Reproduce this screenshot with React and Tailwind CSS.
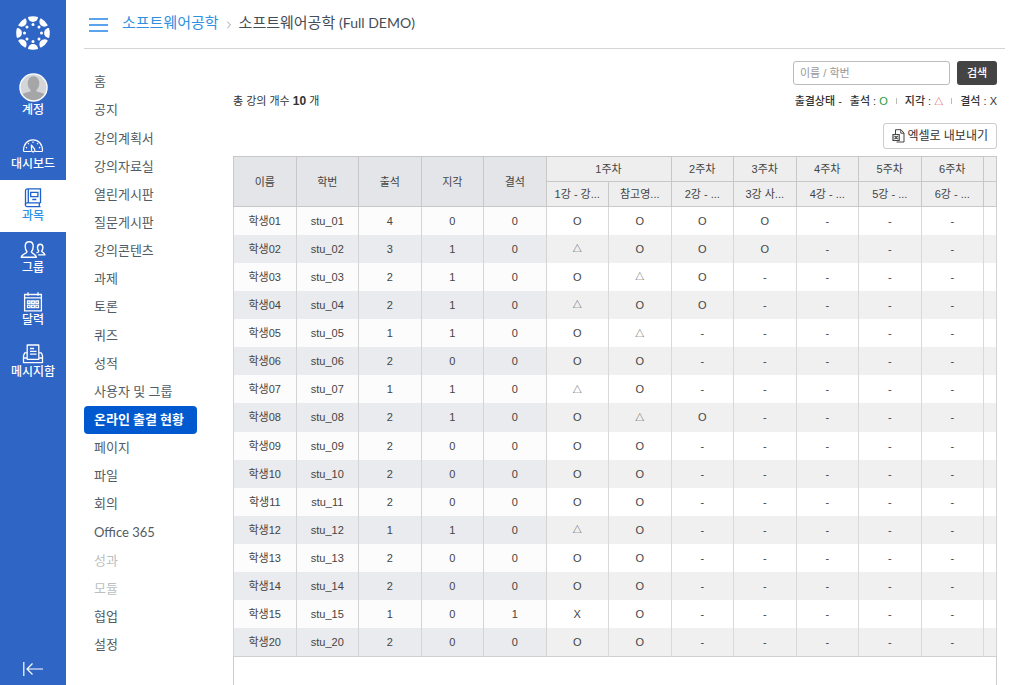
import React, { useState } from 'react';
import { ChevronRight } from 'lucide-react';

const angles = [0, 45, 90, 135, 180, 225, 270, 315];

const LogoIcon = () => (
  <svg viewBox="-17 -17 34 34" className="w-[34px] h-[34px]" fill="white">
    {angles.map((a) => (
      <g key={a} transform={`rotate(${a})`}>
        <path d="M-5 -16 A16.8 16.8 0 0 1 5 -16 A5 4.9 0 0 1 -5 -16Z" />
        <circle cx="0" cy="-8.5" r="1.5" />
      </g>
    ))}
  </svg>
);

const AvatarIcon = () => (
  <svg viewBox="0 0 29 29" className="w-[29px] h-[29px]">
    <clipPath id="avatar">
      <circle cx="14.5" cy="14.5" r="13" />
    </clipPath>
    <circle cx="14.5" cy="14.5" r="13" fill="#d3d5d8" />
    <g clipPath="url(#avatar)" fill="#a6a6a8">
      <ellipse cx="14.5" cy="10.5" rx="5.8" ry="7.3" />
      <path d="M11.5 15h6v3.5c3 .8 8.5 1.5 9.5 5V29H2v-5.5c1-3.5 6.5-4.2 9.5-5z" />
    </g>
    <circle cx="14.5" cy="14.5" r="13.5" fill="none" stroke="white" strokeWidth="1.5" />
  </svg>
);

const DashboardIcon = () => (
  <svg viewBox="0 0 24 20" className="w-6 h-5" fill="none" stroke="currentColor" strokeWidth="1.2">
    <path d="M10 15.500H3.200A.8.8 0 0 1 2.500 14.600C2.500 8 6.500 3.800 12 3.800s9.500 4.200 9.500 10.800a.8.8 0 0 1-.7.9H14" strokeLinejoin="round" />
    <path d="M10.300 9l3.300 4.100a1.800 1.800 0 0 1-2.900 2.100z" strokeLinejoin="round" />
    <path d="M12 5.500v1.500M7 7.200l.8.9M17 7.200l-.8.9M4.800 11.400l1.200.5M19.200 11.400l-1.200.5" />
  </svg>
);

const CoursesIcon = () => (
  <svg viewBox="0 0 24 20" className="w-6 h-5" fill="none" stroke="#1c62c9" strokeWidth="1.3">
    <path d="M19.500 15V.8H6.500a2 2 0 0 0-2 2v13.700" />
    <path d="M19.500 14.800H6.300a1.900 1.900 0 0 0 0 3.900H19.500M18.300 15v3.600M7.300 1v13.800" />
    <path d="M9.700 4.300h7.200v4.400H9.700zM11.300 11.500h4" />
  </svg>
);

const GroupsIcon = () => (
  <svg viewBox="0 0 26 20" className="w-[26px] h-5" fill="none" stroke="currentColor" strokeWidth="1.4" strokeLinejoin="round">
    <path d="M7 11.800C5.700 10.500 5.200 8.500 5.200 6.200 5.200 3.400 6.700 1.700 9.200 1.700s4 1.700 4 4.500c0 2.300-.5 4.300-1.800 5.600 0 2 4.400 1.600 4.900 5.400H1.300C1.800 13.400 7 13.800 7 11.800z" />
    <path d="M16.500 12.800c1.700-.5 2.300-.9 2.300-1.900-.9-.8-1.300-2-1.300-3.500 0-2 .9-3.200 2.700-3.200s2.700 1.200 2.700 3.200c0 1.500-.4 2.700-1.300 3.500 0 1.600 3 1.200 3.300 4h-6.700" />
  </svg>
);

const CalendarIcon = () => (
  <svg viewBox="0 0 24 20" className="w-6 h-5" fill="none" stroke="currentColor" strokeWidth="1.3">
    <path d="M3.600 2.500H20.400V18.800H3.600zM3.600 5.800H20.400M7 .3v3.500M17 .3v3.500" />
    <path d="M6.500 9h2.600v2.400H6.500zM10.700 9h2.600v2.400h-2.600zM14.900 9h2.600v2.400h-2.600zM6.500 13.200h2.600v2.400H6.500zM10.700 13.200h2.600v2.400h-2.600zM14.900 13.200h2.600v2.400h-2.600z" />
  </svg>
);

const InboxIcon = () => (
  <svg viewBox="0 0 24 20" className="w-6 h-5" fill="none" stroke="currentColor" strokeWidth="1.3" strokeLinejoin="round">
    <path d="M6.200 13.500V1H17.800V13.500M9 4.500h4M9 7.300h6.500M9 10.200h6.500" />
    <path d="M6 8.800H3.700l-1.200 3V18.600H21.500V11.800l-1.200-3H18M2.500 14H6.200v1.300H17.800V14H21.500" />
  </svg>
);

const ExcelIcon = () => (
  <svg viewBox="0 0 13 14" className="w-[13px] h-[14px]" fill="none" stroke="#444" strokeWidth="1">
    <path d="M3.500 5V.7H9L12 4V13H4.500M8.800 .7V4.200H12" />
    <path d="M1 5.500H7.200V11.500H1zM2.500 7L5.700 10.200M5.700 7L2.500 10.200" strokeWidth="1.2" />
  </svg>
);

const navItems = [
  { label: '대시보드', icon: <DashboardIcon /> },
  { label: '과목', icon: <CoursesIcon />, active: true },
  { label: '그룹', icon: <GroupsIcon /> },
  { label: '달력', icon: <CalendarIcon /> },
  { label: '메시지함', icon: <InboxIcon /> },
];

const menuItems = [
  '홈', '공지', '강의계획서', '강의자료실', '열린게시판', '질문게시판', '강의콘텐츠',
  '과제', '토론', '퀴즈', '성적', '사용자 및 그룹', '온라인 출결 현황', '페이지',
  '파일', '회의', 'Office 365', '성과', '모듈', '협업', '설정',
];
const activeMenu = '온라인 출결 현황';
const disabledMenus = ['성과', '모듈'];

const summaryColumns = ['이름', '학번', '출석', '지각', '결석'];
const weeks = ['2주차', '3주차', '4주차', '5주차', '6주차'];
const lectures = ['1강 - 강...', '참고영...', '2강 - ...', '3강 사...', '4강 - ...', '5강 - ...', '6강 - ...'];

// marks: one character per lecture
const students = [
  { no: '01', counts: [4, 0, 0], marks: 'OOOO---' },
  { no: '02', counts: [3, 1, 0], marks: '△OOO---' },
  { no: '03', counts: [2, 1, 0], marks: 'O△O----' },
  { no: '04', counts: [2, 1, 0], marks: '△OO----' },
  { no: '05', counts: [1, 1, 0], marks: 'O△-----' },
  { no: '06', counts: [2, 0, 0], marks: 'OO-----' },
  { no: '07', counts: [1, 1, 0], marks: '△O-----' },
  { no: '08', counts: [2, 1, 0], marks: 'O△O----' },
  { no: '09', counts: [2, 0, 0], marks: 'OO-----' },
  { no: '10', counts: [2, 0, 0], marks: 'OO-----' },
  { no: '11', counts: [2, 0, 0], marks: 'OO-----' },
  { no: '12', counts: [1, 1, 0], marks: '△O-----' },
  { no: '13', counts: [2, 0, 0], marks: 'OO-----' },
  { no: '14', counts: [2, 0, 0], marks: 'OO-----' },
  { no: '15', counts: [1, 0, 1], marks: 'XO-----' },
  { no: '20', counts: [2, 0, 0], marks: 'OO-----' },
];

const GlobalNav = () => (
  <nav className="w-[66px] shrink-0 bg-[#2f65c5] text-white flex flex-col text-xs leading-4 font-medium">
    <a href="#" aria-label="Canvas" className="h-[66px] flex items-center justify-center">
      <LogoIcon />
    </a>
    <a href="#" className="h-[62px] pt-[7px] flex flex-col items-center">
      <AvatarIcon />
      계정
    </a>
    {navItems.map((item) => (
      <a
        key={item.label}
        href="#"
        className={`h-[52px] pt-2 flex flex-col items-center whitespace-nowrap ${item.active ? 'bg-white text-[#2f8fe8]' : ''}`}
      >
        {item.icon}
        {item.label}
      </a>
    ))}
    <button aria-label="메뉴 접기" className="mt-auto h-8 flex items-center justify-center">
      <svg viewBox="0 0 20 14" className="w-5 h-[14px]" fill="none" stroke="white" strokeWidth="1.2">
        <path d="M.8 0V14M20 7H4M9.500 1.500L4 7l5.500 5.500" />
      </svg>
    </button>
  </nav>
);

const CourseMenu = () => (
  <ul className="w-[113px] shrink-0 mt-[19px] h-[calc(100vh-94px)] flex flex-col text-[13px] text-[#525c64]">
    {menuItems.map((name) => (
      <li key={name} className="flex-1 flex">
        <a
          href="#"
          className={`flex-1 px-[10px] flex items-center whitespace-nowrap rounded-sm ${
            name === activeMenu ? 'bg-[#0059ce] text-white font-bold' : ''
          } ${disabledMenus.includes(name) ? 'text-[#bcbfc2]' : ''}`}
        >
          {name}
        </a>
      </li>
    ))}
  </ul>
);

const Mark = ({ value }) => (value === '△' ? <span className="text-[9px]">△</span> : value);

const AttendanceTable = () => (
  <table className="w-full table-fixed border-collapse h-[calc(100vh-184px)] text-[11px] leading-4 text-center text-[#444] font-['Liberation_Sans','Noto_Sans_CJK_KR',sans-serif]">
    <colgroup>
      {summaryColumns.map((c) => <col key={c} />)}
      {lectures.map((c) => <col key={c} />)}
      <col className="w-[13px]" />
    </colgroup>
    <thead>
      <tr className="h-[25px]">
        {summaryColumns.map((c) => (
          <th key={c} rowSpan={2} className="bg-[#e3e5e8] border border-[#c8c8c8] font-normal">{c}</th>
        ))}
        <th colSpan={2} className="bg-[#eee] border border-[#c8c8c8] font-normal">1주차</th>
        {weeks.map((w) => (
          <th key={w} className="bg-[#eee] border border-[#c8c8c8] font-normal">{w}</th>
        ))}
        <th className="bg-[#eee] border border-[#c8c8c8]"></th>
      </tr>
      <tr className="h-[25px]">
        {lectures.map((l) => (
          <th key={l} className="bg-[#eee] border border-[#c8c8c8] font-normal whitespace-nowrap">{l}</th>
        ))}
        <th className="bg-[#eee] border border-[#c8c8c8]"></th>
      </tr>
    </thead>
    <tbody className="border-b border-[#d0d0d0]">
      {students.map((s) => (
        <tr key={s.no} className="group h-7">
          {[`학생${s.no}`, `stu_${s.no}`, ...s.counts].map((value, i) => (
            <td key={i} className="border-x border-[#d4d4d4] bg-[#fcfcfc] group-even:bg-[#eaebee]">{value}</td>
          ))}
          {s.marks.split('').map((m, i) => (
            <td key={i} className="border-x border-[#d9d9d9] bg-white group-even:bg-[#f0f0f0]">
              <Mark value={m} />
            </td>
          ))}
          <td className="border-x border-[#d4d4d4] bg-white group-even:bg-[#f0f0f0]"></td>
        </tr>
      ))}
    </tbody>
  </table>
);

const App = () => {
  const [keyword, setKeyword] = useState('');

  return (
    <div className="min-h-screen flex bg-white font-['Lato','Noto_Sans_CJK_KR',sans-serif]">
      <GlobalNav />

      <div className="flex-1 min-w-0 flex flex-col pl-[18px] pr-[19px]">
        <header className="h-[49px] shrink-0 border-b border-[#d2d5d8] flex items-center pl-[5px] pb-[3px] text-[15px] text-[#444e56]">
          <button aria-label="과목 메뉴" className="w-[19px] mr-[14px] mt-1 flex flex-col gap-1">
            <span className="h-[2px] bg-[#5ba3ec]"></span>
            <span className="h-[2px] bg-[#5ba3ec]"></span>
            <span className="h-[2px] bg-[#5ba3ec]"></span>
          </button>
          <a href="#" className="text-[#2f8fe0]">소프트웨어공학</a>
          <ChevronRight size={12} className="mx-1 mt-1 text-gray-400" />
          <span>소프트웨어공학 <span className="text-sm">(Full DEMO)</span></span>
        </header>

        <div className="flex-1 flex">
          <CourseMenu />

          <main className="flex-1 min-w-0 ml-9 mr-2 pt-3 flex flex-col text-[11px] text-[#333] font-['Liberation_Sans','Noto_Sans_CJK_KR',sans-serif]">
            <form className="flex justify-end gap-[7px]" onSubmit={(e) => e.preventDefault()}>
              <input
                type="text"
                aria-label="이름 / 학번"
                placeholder="이름 / 학번"
                value={keyword}
                onChange={(e) => setKeyword(e.target.value)}
                className="w-[157px] h-6 px-[6px] border border-[#bbb] rounded-[3px] placeholder:text-[#999]"
              />
              <button type="submit" className="w-10 h-6 rounded-[3px] bg-[#444] text-white font-medium">검색</button>
            </form>

            <div className="h-8 flex items-center justify-between">
              <p>총 강의 개수 <b className="text-xs">10</b> 개</p>
              <p className="flex items-center font-medium">
                <span className="mr-2">출결상태 -</span>
                <span>출석 : <span className="text-[#1f9d3a]">O</span></span>
                <span className="w-px h-[6px] mx-2 bg-[#bbb]"></span>
                <span>지각 : <span className="text-[9px] text-[#e0393e]">△</span></span>
                <span className="w-px h-[6px] mx-2 bg-[#bbb]"></span>
                <span>결석 : X</span>
              </p>
            </div>

            <button className="self-end mt-[6px] mb-[7px] h-[26px] px-2 flex items-center gap-[2px] border border-[#ccc] rounded-[3px] text-xs">
              <ExcelIcon />
              엑셀로 내보내기
            </button>

            <div className="flex-1 flex flex-col">
              <AttendanceTable />
              <div className="flex-1 border-x border-[#ccc]"></div>
            </div>
          </main>
        </div>
      </div>
    </div>
  );
};

export default App;
